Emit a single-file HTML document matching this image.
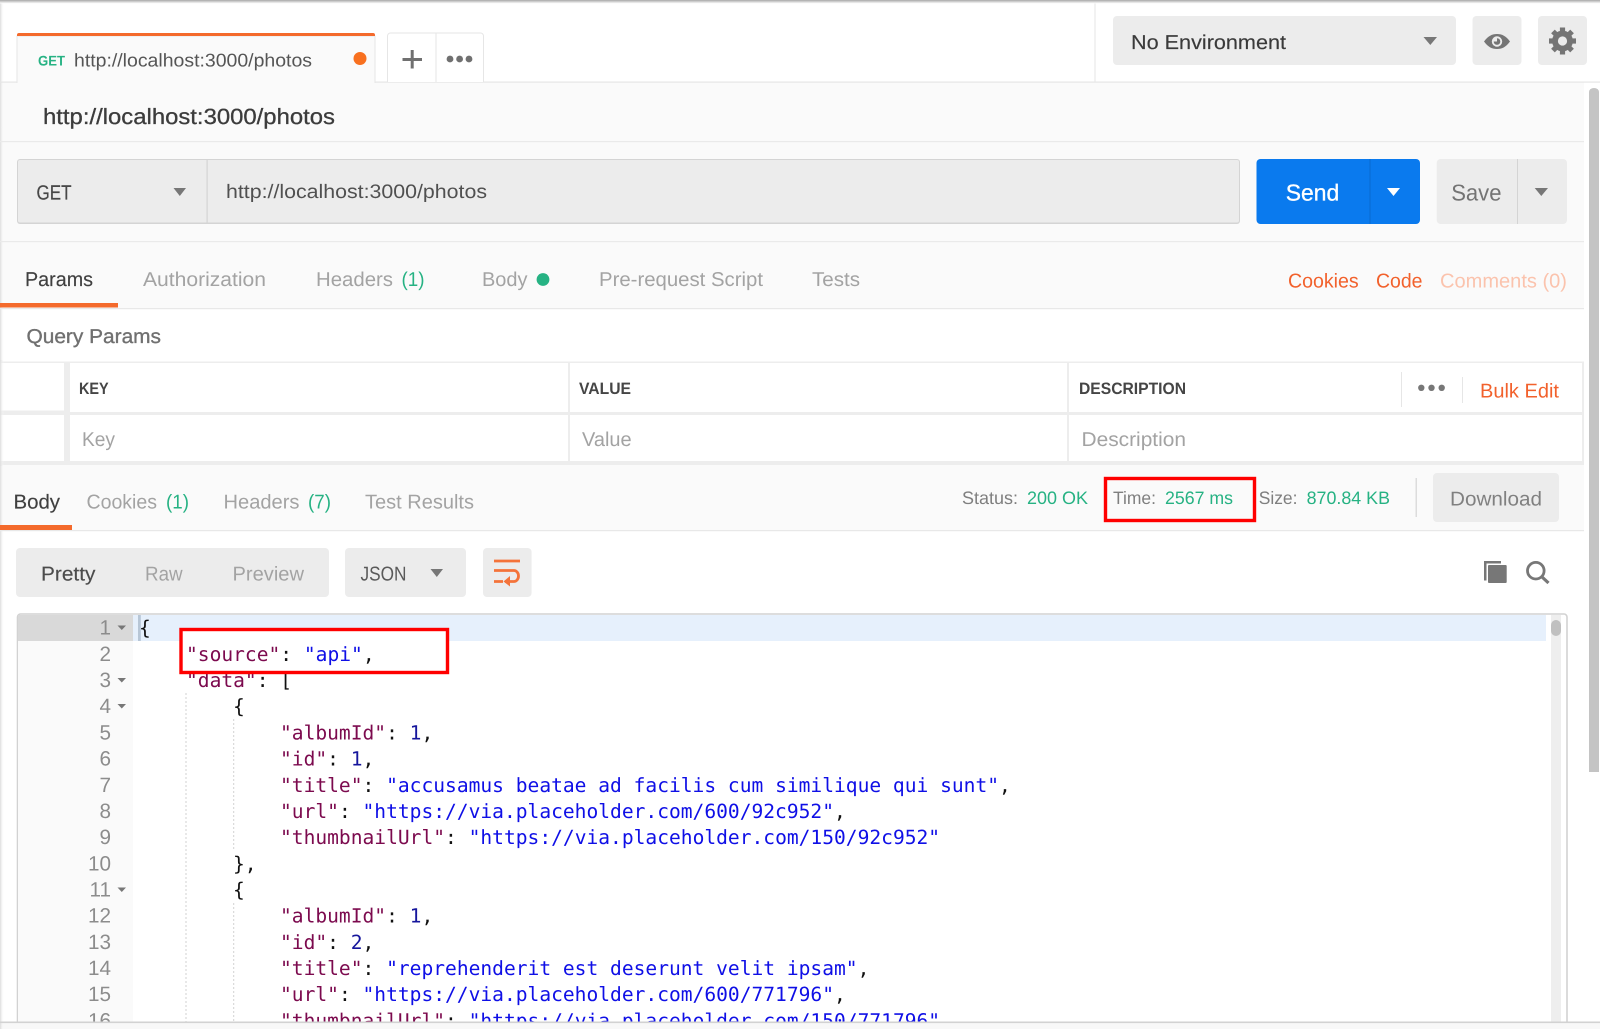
<!DOCTYPE html>
<html lang="en">
<head>
<meta charset="utf-8">
<title>Postman - http://localhost:3000/photos</title>
<style>
html,body{margin:0;padding:0;background:#fff;width:1600px;height:1029px;overflow:hidden}
svg{display:block;position:absolute;left:0;top:0;filter:blur(.35px)}
text{font-family:"Liberation Sans",sans-serif;text-rendering:geometricPrecision;white-space:pre}
.t{font-size:20px;stroke-width:.15px}
.dk{fill:#404040;stroke:#404040}
.gr{fill:#a3a3a3}
.md{fill:#707070}
.gn{fill:#26b283}
.or{fill:#f2612c}
.hd{font-size:16.5px;font-weight:bold;fill:#454545}
.st{font-size:18px;fill:#7f7f7f}
.stg{font-size:18px;fill:#26b283}
.ln{font-size:20.7px;fill:#8c8c8c;text-anchor:end}
.c text{font-family:"DejaVu Sans Mono","Liberation Mono",monospace;font-size:19.58px;fill:#111}
.k{fill:#7c0a4e}
.s{fill:#0f0fe6}
.n{fill:#16169c}
</style>
</head>
<body>
<svg width="1600" height="1029" viewBox="0 0 1600 1029" xmlns="http://www.w3.org/2000/svg">
<defs>
<linearGradient id="top" x1="0" y1="0" x2="0" y2="1"><stop offset="0" stop-color="#a8a8a8"/><stop offset="1" stop-color="#fff"/></linearGradient>
<linearGradient id="left" x1="0" y1="0" x2="1" y2="0"><stop offset="0" stop-color="#dcdcdc"/><stop offset="1" stop-color="#fff" stop-opacity="0"/></linearGradient>
<clipPath id="ed"><rect x="18" y="615" width="1548" height="407"/></clipPath>
</defs>

<!-- page backgrounds -->
<rect x="0" y="0" width="1600" height="1029" fill="#fff"/>
<rect x="0" y="82" width="1584" height="226" fill="#fafafa"/>
<rect x="0" y="465" width="1584" height="65" fill="#fafafa"/>
<rect x="0" y="1022" width="1600" height="7" fill="#f8f8f8"/>
<rect x="0" y="0" width="4" height="1029" fill="url(#left)"/>

<!-- tab bar -->
<rect x="0" y="81.5" width="1600" height="1.2" fill="#e6e6e6"/>
<rect x="1094.5" y="0" width="1" height="82" fill="#e6e6e6"/>
<path d="M17 83V36h358v47" fill="#fafafa" stroke="#e6e6e6"/>
<path d="M17 36v-1a2 2 0 0 1 2-2h354a2 2 0 0 1 2 2v1z" fill="#f46a2c"/>
<text x="38" y="65.3" textLength="27" lengthAdjust="spacingAndGlyphs" font-size="14" font-weight="bold" class="gn">GET</text>
<text x="74" y="66.3" textLength="238" lengthAdjust="spacingAndGlyphs" font-size="18.5" fill="#555">http://localhost:3000/photos</text>
<circle cx="360" cy="58.5" r="6.5" fill="#f8701f"/>
<path d="M387.5 82V36a3 3 0 0 1 3-3h90a3 3 0 0 1 3 3v46M436 33v49" fill="#fff" stroke="#e6e6e6"/>
<path d="M402.5 59.5h19.5M412.2 50v18.5" stroke="#707070" stroke-width="3" fill="none"/>
<circle cx="450" cy="59" r="3.4" fill="#707070"/><circle cx="459.6" cy="59" r="3.4" fill="#707070"/><circle cx="469" cy="59" r="3.4" fill="#707070"/>

<!-- environment -->
<rect x="1113" y="16" width="343" height="49" rx="4" fill="#ececec"/>
<text x="1131" y="48.8" textLength="155" lengthAdjust="spacingAndGlyphs" class="t" fill="#3a3a3a" stroke="#3a3a3a">No Environment</text>
<path d="M1423.5 37h13.5l-6.7 8z" fill="#777"/>
<rect x="1472.5" y="16" width="49" height="49" rx="4" fill="#ececec"/>
<path d="M1484 41.5C1488 36 1492 34 1497 34s9 2 13 7.5C1506 47 1502 49 1497 49s-9-2-13-7.5z" fill="#757575"/>
<circle cx="1497" cy="41.5" r="5.2" fill="#ececec"/>
<path d="M1497 38.2a3.3 3.3 0 1 1-3.3 3.3h3.3z" fill="#757575"/>
<rect x="1538" y="16" width="49" height="49" rx="4" fill="#ececec"/>
<g fill="#757575" transform="translate(1562.5 41)">
<circle r="7.4" fill="none" stroke="#757575" stroke-width="6"/>
<rect x="-2.6" y="-13.5" width="5.2" height="27"/>
<rect x="-2.6" y="-13.5" width="5.2" height="27" transform="rotate(45)"/>
<rect x="-2.6" y="-13.5" width="5.2" height="27" transform="rotate(90)"/>
<rect x="-2.6" y="-13.5" width="5.2" height="27" transform="rotate(135)"/>
<circle r="4.6" fill="#ececec"/>
</g>

<!-- outer scrollbar -->
<path d="M1589 772V92a5 4 0 0 1 10 0v680z" fill="#c4c4c4"/>

<!-- request name -->
<text x="43" y="124" textLength="292" lengthAdjust="spacingAndGlyphs" font-size="22" fill="#3c3c3c" stroke="#3c3c3c" stroke-width=".3">http://localhost:3000/photos</text>
<rect x="0" y="141" width="1584" height="1.2" fill="#eaeaea"/>

<!-- url bar -->
<rect x="17" y="159" width="1223" height="65" rx="3" fill="#d4d4d4"/>
<rect x="18" y="160" width="1221" height="62.5" rx="2" fill="#ececec"/>
<rect x="206.5" y="159" width="1.2" height="65" fill="#d4d4d4"/>
<text x="36.5" y="199.3" textLength="35" lengthAdjust="spacingAndGlyphs" font-size="20.5" fill="#484848" stroke="#484848" stroke-width=".2">GET</text>
<path d="M173.5 188H186l-6.2 8z" fill="#777"/>
<text x="226" y="197.8" textLength="261" lengthAdjust="spacingAndGlyphs" font-size="19.5" fill="#505050">http://localhost:3000/photos</text>
<rect x="1256.5" y="159" width="163.5" height="65" rx="4" fill="#0a7aee"/>
<rect x="1369.5" y="159" width="1" height="65" fill="#086bd0"/>
<text x="1285.7" y="200.6" textLength="53.5" lengthAdjust="spacingAndGlyphs" font-size="23" fill="#fff" stroke="#fff" stroke-width=".3">Send</text>
<path d="M1387 188h13l-6.5 8z" fill="#fff"/>
<rect x="1436.7" y="159" width="130.3" height="65" rx="4" fill="#ececec"/>
<rect x="1517" y="159" width="1" height="65" fill="#d4d4d4"/>
<text x="1451.2" y="200.6" textLength="50.3" lengthAdjust="spacingAndGlyphs" font-size="23" fill="#747474">Save</text>
<path d="M1534.7 188h13.3l-6.7 8z" fill="#777"/>
<rect x="0" y="241" width="1584" height="1.2" fill="#eaeaea"/>

<!-- request tabs -->
<text x="25" y="286" textLength="68" lengthAdjust="spacingAndGlyphs" class="t dk">Params</text>
<text x="143" y="286" textLength="123" lengthAdjust="spacingAndGlyphs" class="t gr">Authorization</text>
<text x="316" y="286" textLength="77" lengthAdjust="spacingAndGlyphs" class="t gr">Headers</text>
<text x="401.5" y="286" textLength="23" lengthAdjust="spacingAndGlyphs" class="t gn">(1)</text>
<text x="482" y="286" textLength="45.5" lengthAdjust="spacingAndGlyphs" class="t gr">Body</text>
<circle cx="543" cy="279.5" r="6.4" fill="#26b283"/>
<text x="599" y="286" textLength="164" lengthAdjust="spacingAndGlyphs" class="t gr">Pre-request Script</text>
<text x="812" y="286" textLength="48" lengthAdjust="spacingAndGlyphs" class="t gr">Tests</text>
<text x="1288" y="287.5" textLength="70.7" lengthAdjust="spacingAndGlyphs" class="t or">Cookies</text>
<text x="1376" y="287.5" textLength="46.5" lengthAdjust="spacingAndGlyphs" class="t or">Code</text>
<text x="1440" y="287.5" textLength="127" lengthAdjust="spacingAndGlyphs" class="t" fill="#fbc3ad">Comments (0)</text>
<rect x="0" y="308" width="1584" height="1.2" fill="#e8e8e8"/>
<rect x="0" y="303" width="118" height="4.5" fill="#f46a2c"/>

<!-- query params -->
<text x="26.5" y="343" textLength="134.5" lengthAdjust="spacingAndGlyphs" class="t md" stroke="#707070" style="stroke-width:.35px">Query Params</text>
<rect x="0" y="361.5" width="1584" height="103.5" fill="#ededed"/>
<rect x="0" y="363" width="64" height="47.5" fill="#fff"/>
<rect x="0" y="415" width="64" height="46" fill="#fff"/>
<rect x="70" y="363" width="498" height="49" fill="#fff"/>
<rect x="70" y="415" width="498" height="46" fill="#fff"/>
<rect x="570" y="363" width="497" height="49" fill="#fff"/>
<rect x="570" y="415" width="497" height="46" fill="#fff"/>
<rect x="1069" y="363" width="513" height="49" fill="#fff"/>
<rect x="1069" y="415" width="513" height="46" fill="#fff"/>
<rect x="0" y="360" width="4" height="106" fill="url(#left)"/>
<text x="79" y="394" textLength="29.7" lengthAdjust="spacingAndGlyphs" class="hd">KEY</text>
<text x="579" y="394" textLength="52" lengthAdjust="spacingAndGlyphs" class="hd">VALUE</text>
<text x="1079" y="394" textLength="107" lengthAdjust="spacingAndGlyphs" class="hd">DESCRIPTION</text>
<rect x="1401" y="372" width="1" height="35" fill="#e6e6e6"/>
<rect x="1462" y="377" width="1" height="26" fill="#e6e6e6"/>
<circle cx="1421.3" cy="387.8" r="3.2" fill="#777"/><circle cx="1431.5" cy="387.8" r="3.2" fill="#777"/><circle cx="1441.7" cy="387.8" r="3.2" fill="#777"/>
<text x="1480" y="397.3" textLength="79" lengthAdjust="spacingAndGlyphs" class="t or">Bulk Edit</text>
<text x="82" y="446" textLength="33" lengthAdjust="spacingAndGlyphs" class="t gr">Key</text>
<text x="582" y="446" textLength="49.6" lengthAdjust="spacingAndGlyphs" class="t gr">Value</text>
<text x="1081.5" y="446" textLength="104.5" lengthAdjust="spacingAndGlyphs" class="t gr">Description</text>

<!-- response bar -->
<text x="13.5" y="508.5" textLength="46.5" lengthAdjust="spacingAndGlyphs" class="t dk">Body</text>
<text x="86.5" y="508.5" textLength="70.5" lengthAdjust="spacingAndGlyphs" class="t gr">Cookies</text>
<text x="166" y="508.5" textLength="23" lengthAdjust="spacingAndGlyphs" class="t gn">(1)</text>
<text x="223.5" y="508.5" textLength="76" lengthAdjust="spacingAndGlyphs" class="t gr">Headers</text>
<text x="308" y="508.5" textLength="23" lengthAdjust="spacingAndGlyphs" class="t gn">(7)</text>
<text x="365" y="508.5" textLength="109" lengthAdjust="spacingAndGlyphs" class="t gr">Test Results</text>
<rect x="0" y="530" width="1584" height="1.2" fill="#e8e8e8"/>
<rect x="0" y="525" width="72" height="5" fill="#f46a2c"/>
<text x="962" y="504" textLength="56" lengthAdjust="spacingAndGlyphs" class="st">Status:</text>
<text x="1027" y="504" textLength="61" lengthAdjust="spacingAndGlyphs" class="stg">200 OK</text>
<text x="1113" y="504" textLength="43" lengthAdjust="spacingAndGlyphs" class="st">Time:</text>
<text x="1165" y="504" textLength="68" lengthAdjust="spacingAndGlyphs" class="stg">2567 ms</text>
<text x="1258.7" y="504" textLength="38.8" lengthAdjust="spacingAndGlyphs" class="st">Size:</text>
<text x="1306.6" y="504" textLength="83.4" lengthAdjust="spacingAndGlyphs" class="stg">870.84 KB</text>
<rect x="1105.5" y="478.5" width="149" height="42" fill="none" stroke="#ff0000" stroke-width="3.4"/>
<rect x="1415.5" y="478" width="1.5" height="39" fill="#dcdcdc"/>
<rect x="1433" y="473" width="126" height="49" rx="4" fill="#ececec"/>
<text x="1450" y="505.3" textLength="92" lengthAdjust="spacingAndGlyphs" class="t" fill="#808080">Download</text>

<!-- response toolbar -->
<rect x="16" y="548" width="313" height="49" rx="4" fill="#ececec"/>
<text x="41" y="580.5" textLength="54.4" lengthAdjust="spacingAndGlyphs" class="t" fill="#4c4c4c" stroke="#4c4c4c">Pretty</text>
<text x="145" y="580.5" textLength="37.6" lengthAdjust="spacingAndGlyphs" class="t gr">Raw</text>
<text x="232.5" y="580.5" textLength="71.5" lengthAdjust="spacingAndGlyphs" class="t gr">Preview</text>
<rect x="345" y="548" width="121" height="49" rx="4" fill="#ececec"/>
<text x="360.5" y="580.5" textLength="46" lengthAdjust="spacingAndGlyphs" class="t" fill="#5a5a5a">JSON</text>
<path d="M430.5 569H443l-6.2 8z" fill="#777"/>
<rect x="483" y="548" width="48.6" height="49" rx="4" fill="#ececec"/>
<path d="M494 561h26M494 570.5h20a4.5 5.5 0 0 1 0 11h-9M494 581.5h9" fill="none" stroke="#f4733a" stroke-width="2.8"/>
<path d="M510 576l-6.500 5.500 6.500 5z" fill="#f4733a"/>
<g fill="#777">
<path d="M1484 580.5V561h17v2.5h-14.500v17z"/>
<rect x="1488" y="565" width="18.7" height="18" rx="1"/>
</g>
<circle cx="1535.8" cy="570.7" r="8.3" fill="none" stroke="#777" stroke-width="2.8"/>
<path d="M1541.5 576.5l7 6.5" stroke="#777" stroke-width="3.2" fill="none"/>

<!-- editor -->
<path d="M17.5 1022V617a3 3 0 0 1 3-3H1564a3 3 0 0 1 3 3v405" fill="#fff" stroke="#d2d2d2" stroke-width="1.6"/>
<g clip-path="url(#ed)">
<rect x="18" y="615" width="115" height="407" fill="#fafafa"/>
<rect x="18" y="615" width="115" height="26" fill="#d9d9d9"/>
<rect x="133" y="615" width="1413" height="26" fill="#e6f0fc"/>
<rect x="138" y="615" width="2.8" height="26" fill="#b7c6d6"/>
<rect x="1551" y="615" width="10" height="407" fill="#eeeeee"/>
<rect x="1551" y="620" width="10" height="16" rx="5" fill="#c0c0c0"/>
<path d="M186 693v329M233.7 719v130M233.7 903v119" stroke="#d2d2d2" stroke-dasharray="2 2" fill="none"/>

<g>
<text class="ln" x="111" y="634.7">1</text>
<text class="ln" x="111" y="660.9">2</text>
<text class="ln" x="111" y="687.1">3</text>
<text class="ln" x="111" y="713.2">4</text>
<text class="ln" x="111" y="739.4">5</text>
<text class="ln" x="111" y="765.6">6</text>
<text class="ln" x="111" y="791.8">7</text>
<text class="ln" x="111" y="818">8</text>
<text class="ln" x="111" y="844.1">9</text>
<text class="ln" x="111" y="870.3">10</text>
<text class="ln" x="111" y="896.5">11</text>
<text class="ln" x="111" y="922.7">12</text>
<text class="ln" x="111" y="948.9">13</text>
<text class="ln" x="111" y="975">14</text>
<text class="ln" x="111" y="1001.2">15</text>
<text class="ln" x="111" y="1027.4">16</text>
</g>
<g fill="#777">
<path d="M117.5 625.5h8.5l-4.2 4.5z"/>
<path d="M117.5 678h8.5l-4.2 4.5z"/>
<path d="M117.5 704h8.5l-4.2 4.5z"/>
<path d="M117.5 887.5h8.5l-4.2 4.5z"/>
</g>

<g class="c">
<text x="139" y="634.7">{</text>
<text x="186" y="687.1"><tspan class="k">"data"</tspan>: [</text>
</g>
<rect x="181" y="629.5" width="266.5" height="43" fill="#fff" stroke="#ff0000" stroke-width="3.4"/>
<g class="c">
<text x="186" y="660.9"><tspan class="k">"source"</tspan>: <tspan class="s">"api"</tspan>,</text>
<text x="233" y="713.2">{</text>
<text x="280" y="739.4"><tspan class="k">"albumId"</tspan>: <tspan class="n">1</tspan>,</text>
<text x="280" y="765.6"><tspan class="k">"id"</tspan>: <tspan class="n">1</tspan>,</text>
<text x="280" y="791.8"><tspan class="k">"title"</tspan>: <tspan class="s">"accusamus beatae ad facilis cum similique qui sunt"</tspan>,</text>
<text x="280" y="818"><tspan class="k">"url"</tspan>: <tspan class="s">"https://via.placeholder.com/600/92c952"</tspan>,</text>
<text x="280" y="844.1"><tspan class="k">"thumbnailUrl"</tspan>: <tspan class="s">"https://via.placeholder.com/150/92c952"</tspan></text>
<text x="233" y="870.3">},</text>
<text x="233" y="896.5">{</text>
<text x="280" y="922.7"><tspan class="k">"albumId"</tspan>: <tspan class="n">1</tspan>,</text>
<text x="280" y="948.9"><tspan class="k">"id"</tspan>: <tspan class="n">2</tspan>,</text>
<text x="280" y="975"><tspan class="k">"title"</tspan>: <tspan class="s">"reprehenderit est deserunt velit ipsam"</tspan>,</text>
<text x="280" y="1001.2"><tspan class="k">"url"</tspan>: <tspan class="s">"https://via.placeholder.com/600/771796"</tspan>,</text>
<text x="280" y="1027.4"><tspan class="k">"thumbnailUrl"</tspan>: <tspan class="s">"https://via.placeholder.com/150/771796"</tspan></text>
</g>
</g>
<rect x="0" y="1021.5" width="1600" height="1.6" fill="#d2d2d2"/>

<!-- window shadow -->
<rect x="0" y="0" width="1600" height="3.5" fill="url(#top)"/>
</svg>
</body>
</html>
